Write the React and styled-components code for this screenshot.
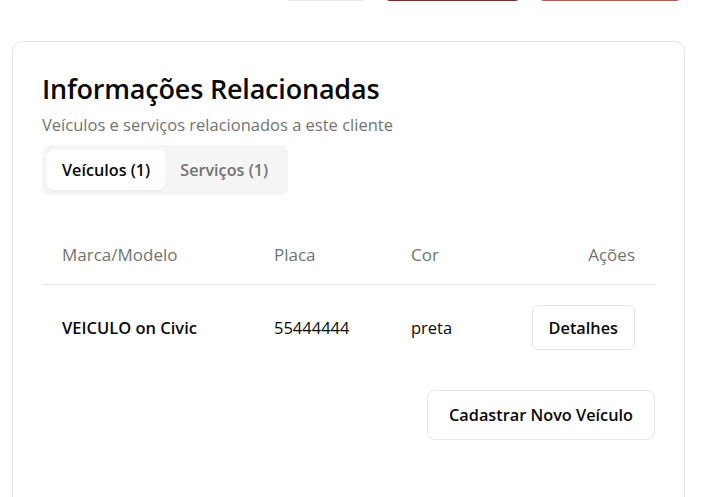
import React from 'react';
import styled, { createGlobalStyle } from 'styled-components';

const GlobalStyle = createGlobalStyle`
  body {
    margin: 0;
    background: #fff;
    font-family: "Open Sans", "Noto Sans", sans-serif;
    color: #0a0a0a;
  }
  * { box-sizing: border-box; }
`;

const Page = styled.div`
  padding: 0 25px 0 12px;
  overflow: hidden;
  height: 497px;
`;

const TopBar = styled.div`
  display: flex;
  justify-content: flex-end;
  gap: 17px;
  margin-top: -39px;
  padding-right: 3px;
`;

const TopButton = styled.button`
  height: 40px;
  width: ${(p) => p.$w}px;
  border-radius: 6px;
  border: 1px solid ${(p) => p.$border};
  background: ${(p) => p.$bg};
`;

const Card = styled.section`
  margin-top: 40px;
  border: 1px solid #e5e5e5;
  border-radius: 10px;
  padding: 29px 29px 40px;
  min-height: 520px;
`;

const Title = styled.h2`
  margin: 0;
  font-size: 27px;
  line-height: 36px;
  font-weight: 600;
  letter-spacing: -0.2px;
`;

const Subtitle = styled.p`
  margin: 6px 0 0;
  font-size: 16.5px;
  line-height: 24px;
  color: #737373;
`;

const TabList = styled.div`
  display: inline-flex;
  align-items: center;
  height: 50px;
  margin-top: 8px;
  padding: 5px;
  background: #f5f5f5;
  border-radius: 8px;
`;

const Tab = styled.button`
  border: none;
  border-radius: 6px;
  height: 40px;
  padding: 0 15px;
  font-family: inherit;
  font-size: 16.2px;
  font-weight: 600;
  background: ${(p) => (p.$active ? '#fff' : 'transparent')};
  color: ${(p) => (p.$active ? '#0a0a0a' : '#737373')};
  box-shadow: ${(p) => (p.$active ? '0 1px 2px rgba(0,0,0,0.05)' : 'none')};
`;

const Table = styled.table`
  width: 100%;
  margin-top: 31px;
  border-collapse: collapse;
  font-size: 16.5px;
`;

const Th = styled.th`
  text-align: ${(p) => p.$align || 'left'};
  width: ${(p) => p.$w || 'auto'};
  padding: 20px 20px 20px;
  line-height: 18px;
  font-size: 17px;
  font-weight: 500;
  color: #737373;
  border-bottom: 1px solid #e5e5e5;
`;

const Td = styled.td`
  text-align: ${(p) => p.$align || 'left'};
  padding: 20px;
  line-height: 18px;
  font-weight: ${(p) => (p.$bold ? 600 : 400)};
`;

const OutlineButton = styled.button`
  height: ${(p) => p.$h}px;
  padding: 0 ${(p) => p.$px}px;
  border: 1px solid #e5e5e5;
  border-radius: ${(p) => p.$r}px;
  background: #fff;
  font-family: inherit;
  font-size: 16.3px;
  font-weight: 600;
  color: #0a0a0a;
`;

const Footer = styled.div`
  display: flex;
  justify-content: flex-end;
  margin-top: 20px;
`;

export default function App() {
  return (
    <Page>
      <GlobalStyle />
      <TopBar>
        <TopButton $w={83} $bg="#fff" $border="#e5e5e5" />
        <TopButton $w={137} $bg="#b91c1c" $border="#991b1b" />
        <TopButton $w={144} $bg="#ef4444" $border="#ef4444" />
      </TopBar>
      <Card>
        <Title>Informações Relacionadas</Title>
        <Subtitle>Veículos e serviços relacionados a este cliente</Subtitle>
        <TabList>
          <Tab $active>Veículos (1)</Tab>
          <Tab>Serviços (1)</Tab>
        </TabList>
        <Table>
          <thead>
            <tr>
              <Th $w="212px">Marca/Modelo</Th>
              <Th $w="137px">Placa</Th>
              <Th>Cor</Th>
              <Th $align="right">Ações</Th>
            </tr>
          </thead>
          <tbody>
            <tr>
              <Td $bold>VEICULO on Civic</Td>
              <Td>55444444</Td>
              <Td>preta</Td>
              <Td $align="right">
                <OutlineButton $h={45} $px={16} $r={6}>Detalhes</OutlineButton>
              </Td>
            </tr>
          </tbody>
        </Table>
        <Footer>
          <OutlineButton $h={50} $px={21} $r={8}>Cadastrar Novo Veículo</OutlineButton>
        </Footer>
      </Card>
    </Page>
  );
}
